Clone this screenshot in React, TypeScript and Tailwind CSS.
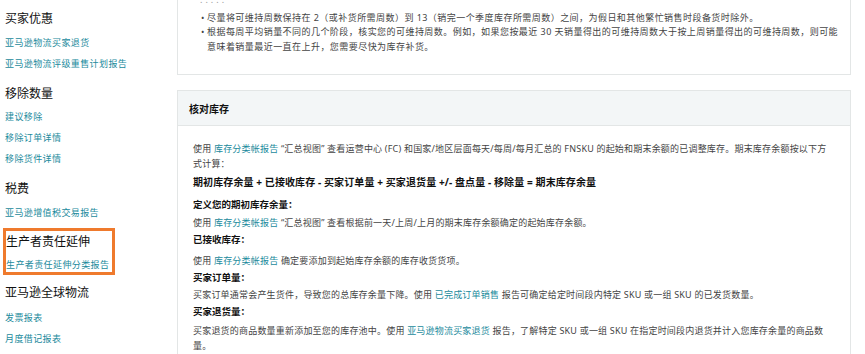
import React from 'react';

const linkCls = 'text-[#1b8a9c]';

type Section = { title: string; links: string[]; boxed?: boolean; mt: string; firstGap: string };

const sections: Section[] = [
  { title: '买家优惠', links: ['亚马逊物流买家退货', '亚马逊物流评级重售计划报告'], mt: 'mt-[11px]', firstGap: 'mt-[9px]' },
  { title: '移除数量', links: ['建议移除', '移除订单详情', '移除货件详情'], mt: 'mt-[15px]', firstGap: 'mt-[8px]' },
  { title: '税费', links: ['亚马逊增值税交易报告'], mt: 'mt-[15px]', firstGap: 'mt-[9px]' },
  { title: '生产者责任延伸', links: ['生产者责任延伸分类报告'], boxed: true, mt: 'mt-[8px]', firstGap: 'mt-[8px]' },
  { title: '亚马逊全球物流', links: ['发票报表', '月度借记报表'], mt: 'mt-[10px]', firstGap: 'mt-[10px]' },
];

function SideSection({ s }: { s: Section }) {
  const body = (
    <>
      <div className="h-4 text-[12px] leading-4 text-[#111]">{s.title}</div>
      {s.links.map((l, i) => (
        <div
          key={l}
          className={`h-[14px] text-[9px] leading-[14px] tracking-[0.4px] ${linkCls} ${i === 0 ? s.firstGap : 'mt-[7px]'}`}
        >
          {l}
        </div>
      ))}
    </>
  );

  if (s.boxed) {
    return (
      <div className={`${s.mt} ml-[3px] w-[112px] border-[3px] border-[#ef7a2d] pt-[3px]`}>
        {body}
      </div>
    );
  }
  return <div className={`pl-[5px] ${s.mt}`}>{body}</div>;
}

function A({ children }: { children: React.ReactNode }) {
  return <span className={linkCls}>{children}</span>;
}

export default function App() {
  return (
    <div
      className="flex h-[354px] w-[865px] overflow-hidden bg-white text-[#444]"
      style={{ fontFamily: '"Noto Sans", "Noto Sans CJK SC", sans-serif' }}
    >
      {/* sidebar */}
      <div className="w-[177px] shrink-0">
        {sections.map((s) => (
          <SideSection key={s.title} s={s} />
        ))}
      </div>

      {/* main */}
      <div className="mr-[14px] flex-1">
        <div className="-mt-[10px] border border-[#e3e6e6] pt-[2px] pb-[20px] pl-[10px] text-[9px] leading-[14.5px] tracking-[0.45px]">
          <div className="pl-[12px] tracking-[3px] text-[#999]">.....</div>
          <ul className="mt-[3px] whitespace-nowrap">
            <li className="flex">
              <span className="w-[19px] shrink-0 pl-[13px]">•</span>
              <span>尽量将可维持周数保持在 2（或补货所需周数）到 13（销完一个季度库存所需周数）之间，为假日和其他繁忙销售时段备货时除外。</span>
            </li>
            <li className="flex">
              <span className="w-[19px] shrink-0 pl-[13px]">•</span>
              <span>
                根据每周平均销量不同的几个阶段，核实您的可维持周数。例如，如果您按最近 30 天销量得出的可维持周数大于按上周销量得出的可维持周数，则可能
                <br />
                意味着销量最近一直在上升，您需要尽快为库存补货。
              </span>
            </li>
          </ul>
        </div>

        <div className="mt-[15px] border border-[#e3e6e6]">
          <div className="flex h-[35px] items-center border-b border-[#e3e6e6] bg-[#f3f6f7] pt-[2px] pl-[11px] text-[10px] font-bold text-[#111]">
            核对库存
          </div>
          <div className="pt-[15px] pb-[20px] pl-[15px] text-[9px] leading-[15px] tracking-[0.2px] whitespace-nowrap">
            <p>
              使用 <A>库存分类帐报告</A> “汇总视图” 查看运营中心 (FC) 和国家/地区层面每天/每周/每月汇总的 FNSKU 的起始和期末余额的已调整库存。期末库存余额按以下方
              <br />
              式计算：
            </p>
            <p className="mt-[3px] text-[10px] leading-4 font-bold tracking-[0.1px] text-[#111]">
              期初库存余量 + 已接收库存 - 买家订单量 + 买家退货量 +/- 盘点量 - 移除量 = 期末库存余量
            </p>
            <p className="mt-[7px] text-[9.5px] font-bold tracking-normal text-[#111]">定义您的期初库存余量：</p>
            <p className="mt-[3px]">
              使用 <A>库存分类帐报告</A> “汇总视图” 查看根据前一天/上周/上月的期末库存余额确定的起始库存余额。
            </p>
            <p className="mt-[2px] text-[9.5px] font-bold tracking-normal text-[#111]">已接收库存：</p>
            <p className="mt-[6px]">
              使用 <A>库存分类帐报告</A> 确定要添加到起始库存余额的库存收货货项。
            </p>
            <p className="mt-[2px] text-[9.5px] font-bold tracking-normal text-[#111]">买家订单量：</p>
            <p className="mt-[2px]">
              买家订单通常会产生货件，导致您的总库存余量下降。使用 <A>已完成订单销售</A> 报告可确定给定时间段内特定 SKU 或一组 SKU 的已发货数量。
            </p>
            <p className="mt-[2px] text-[9.5px] font-bold tracking-normal text-[#111]">买家退货量：</p>
            <p className="mt-[4px]">
              买家退货的商品数量重新添加至您的库存池中。使用 <A>亚马逊物流买家退货</A> 报告，了解特定 SKU 或一组 SKU 在指定时间段内退货并计入您库存余量的商品数
              <br />
              量。
            </p>
          </div>
        </div>
      </div>
    </div>
  );
}
